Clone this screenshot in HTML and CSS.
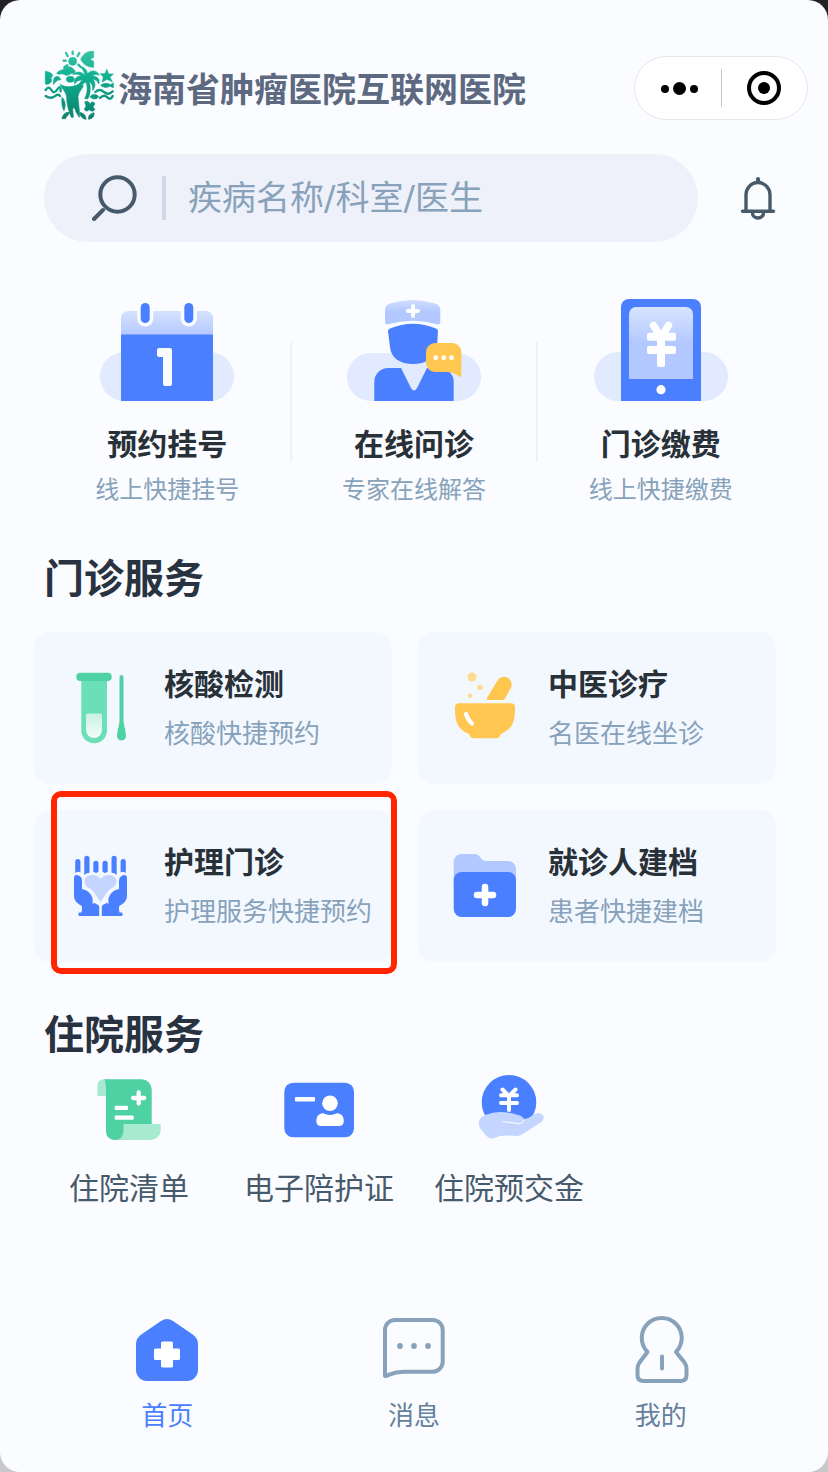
FILE: index.html
```html
<!DOCTYPE html>
<html lang="zh-CN">
<head>
    <meta charset="UTF-8">
    <meta name="viewport" content="width=device-width, initial-scale=1.0">
    <title>海南省肿瘤医院互联网医院</title>
    <link rel="stylesheet" href="styles.css">
</head>
<body>
    <div class="screen">
        <header class="header">
            <svg class="logo" viewBox="12 18 210 210" aria-hidden="true">
                <defs>
                    <linearGradient id="logoFill" gradientUnits="userSpaceOnUse" x1="0" y1="18" x2="0" y2="228">
                        <stop offset="0" stop-color="#3cc4a4"/>
                        <stop offset="0.4" stop-color="#0fae90"/>
                        <stop offset="1" stop-color="#0b7f6b"/>
                    </linearGradient>
                </defs>
                <g fill="url(#logoFill)" stroke="url(#logoFill)" stroke-width="2" stroke-linejoin="round">
                    <!-- sun and bird -->
                    <circle cx="98" cy="52" r="12"/>
                    <path d="M122 46C132 26 144 21 161 22V40L150 46L161 52V70C144 70 130 62 122 46Z"/>
                    <!-- cloud -->
                    <path d="M50 88C56 78 66 80 72 74C82 64 98 68 102 78C108 80 106 88 98 88C90 88 84 98 74 92C66 86 58 94 50 88Z"/>
                    <!-- palm tree -->
                    <path d="M137 96C124 80 108 82 98 92C108 88 118 92 124 96C108 96 102 106 104 120C110 110 118 108 128 108C118 114 116 126 120 134C124 124 132 116 138 114C144 132 142 150 134 164H144C152 148 152 130 148 112C156 118 160 128 158 140C168 128 166 112 158 106C166 106 174 112 176 120C182 106 170 94 156 96C162 90 172 90 178 94C172 78 152 76 142 90C142 78 134 68 120 68C130 76 132 84 137 96Z"/>
                    <!-- figure -->
                    <ellipse cx="91" cy="106" rx="12" ry="9"/>
                    <path d="M60 120C74 132 102 130 120 118L130 126C124 138 116 144 114 158C114 176 120 196 118 220L108 204C104 190 100 188 98 196L100 220H94C84 196 80 178 80 158C78 144 66 134 60 120Z"/>
                    <!-- star -->
                    <path d="M200 76L206 90L220 90L210 100L217 113L201 106L187 114L190 99L181 89L195 89Z"/>
                    <!-- butterfly and fish -->
                    <path d="M16 82C36 84 44 96 32 102C40 112 28 124 16 120Z"/>
                    <path d="M42 102C50 94 60 96 62 108C54 106 48 112 40 122Z"/>
                    <path d="M182 124C192 116 204 117 210 122L220 117V131L210 127C200 132 190 131 182 124Z"/>
                    <path d="M150 158C158 148 170 150 176 158C168 168 158 166 150 158Z"/>
                    <!-- flower -->
                    <path d="M134 174C142 168 148 174 150 180C156 170 166 174 164 182C158 186 158 190 165 196C160 204 152 202 148 197C142 204 132 202 134 192C140 188 138 184 134 174Z"/>
                    <!-- leaves -->
                    <path d="M66 160C76 170 78 184 72 200C66 190 64 176 66 160Z"/>
                    <path d="M66 224C68 212 78 202 88 206C86 214 80 216 76 224Z"/>
                    <path d="M120 206C130 206 138 214 138 226C128 224 120 218 120 206Z"/>
                    <path d="M162 206C148 210 144 216 146 226C158 224 164 216 162 206Z"/>
                </g>
                <g fill="none" stroke="url(#logoFill)" stroke-width="7" stroke-linecap="round">
                    <path d="M98 30V23M113 36L118 27M83 36L78 27M77 50H71M82 64L73 70M115 62L122 69"/>
                    <path d="M17 138Q26 124 34 138T52 136T62 142M17 156Q32 166 44 157T60 156"/>
                    <path d="M166 144Q178 132 192 144T218 142M180 162Q192 150 202 160T218 156"/>
                </g>
            </svg>
            <h1 class="title">海南省肿瘤医院互联网医院</h1>
            <div class="capsule">
                <button type="button" class="capsule-btn" aria-label="更多">
                    <svg width="42" height="14" viewBox="-4 0 42 14">
                        <circle cx="4" cy="8" r="4"/>
                        <circle cx="18.500" cy="7.500" r="6.5"/>
                        <circle cx="33" cy="8" r="4"/>
                    </svg>
                </button>
                <span class="capsule-line"></span>
                <button type="button" class="capsule-btn" aria-label="关闭">
                    <svg width="34" height="34" viewBox="0 0 34 34">
                        <circle cx="17" cy="17" r="15" fill="none" stroke="#000" stroke-width="4"/>
                        <circle cx="17" cy="17" r="6"/>
                    </svg>
                </button>
            </div>
        </header>

        <div class="search-row">
            <label class="search">
                <svg class="search-icon" viewBox="0 0 46 46" fill="none" stroke="#475a6b" stroke-width="4" stroke-linecap="round" aria-hidden="true">
                    <circle cx="25.5" cy="19.5" r="17.2"/>
                    <path d="M11 35L2 44"/>
                </svg>
                <span class="search-line"></span>
                <input type="text" class="search-input" placeholder="疾病名称/科室/医生" aria-label="搜索">
            </label>
            <button type="button" class="bell" aria-label="通知">
                <svg width="36" height="44" viewBox="0 0 36 44" fill="none" stroke="#475a6b" stroke-width="3.4" stroke-linecap="round">
                    <path d="M6 35V19a12 12.5 0 0 1 24 0v16M2.500 35.300h31M12.500 37a5.500 5 0 0 0 11 0"/>
                    <path d="M18 3v2" stroke-width="4"/>
                </svg>
            </button>
        </div>

        <nav class="entries">
            <a href="#" class="entry">
                <svg class="entry-icon" viewBox="0 0 134 104" aria-hidden="true">
                    <defs>
                        <linearGradient id="calTop" x1="0" y1="0" x2="0" y2="1">
                            <stop offset="0" stop-color="#d6e2ff"/>
                            <stop offset="1" stop-color="#b3c8ff"/>
                        </linearGradient>
                    </defs>
                    <rect y="54" width="134" height="49" rx="24.5" fill="#e1eafe"/>
                    <path d="M21 37V20a7 7 0 0 1 7-7h78a7 7 0 0 1 7 7v17z" fill="url(#calTop)"/>
                    <rect x="21" y="36.500" width="92" height="66.500" fill="#4a80ff"/>
                    <g fill="#4a80ff" stroke="#fbfcff" stroke-width="7" paint-order="stroke">
                        <rect x="40.700" y="5" width="9" height="20" rx="4.500"/>
                        <rect x="84.300" y="5" width="9" height="20" rx="4.500"/>
                    </g>
                    <path d="M59 50h11q2 0 2 2v34q0 2-2 2h-5q-2 0-2-2V59h-4q-2 0-2-2v-5q0-2 2-2z" fill="#fafbff"/>
                </svg>
                <span class="entry-name">预约挂号</span>
                <span class="entry-desc">线上快捷挂号</span>
            </a>
            <a href="#" class="entry">
                <svg class="entry-icon" viewBox="0 0 134 104" aria-hidden="true">
                    <defs>
                        <linearGradient id="capFill" x1="0" y1="0" x2="0" y2="1">
                            <stop offset="0" stop-color="#d0deff"/>
                            <stop offset="0.5" stop-color="#b3c8ff"/>
                        </linearGradient>
                    </defs>
                    <rect y="55" width="134" height="48" rx="24" fill="#e1eafe"/>
                    <path d="M38 12q0-5 5-6.500Q66-1.500 88 5.500q5.300 1.500 5.300 6.500v12q0 3-3 2.300Q66 19 41 26.300q-3 .7-3-2.300z" fill="url(#capFill)"/>
                    <path d="M66 8v10M61 13h10" stroke="#fff" stroke-width="4" stroke-linecap="round"/>
                    <path d="M41 33q0-2 2-2.500Q66 21 89 30.500q2 .5 2 2.500l-1 16C88 60 79 66 66 66S44 60 43 49z" fill="#4a80ff"/>
                    <path d="M27.300 103V84a14 14 0 0 1 14-14H54l10 20q3 5 6 0l10-20h12.700a14 14 0 0 1 14 14v19z" fill="#4a80ff"/>
                    <path d="M88 45h17.300a9 9 0 0 1 9 9v24q-1 1.500-3 0-5-4-10.300-4H88a9 9 0 0 1-9-9V54a9 9 0 0 1 9-9z" fill="#ffc74f"/>
                    <g fill="#fff">
                        <circle cx="88.700" cy="59.700" r="2.400"/>
                        <circle cx="96.700" cy="59.700" r="2.400"/>
                        <circle cx="104.500" cy="59.700" r="2.400"/>
                    </g>
                </svg>
                <span class="entry-name">在线问诊</span>
                <span class="entry-desc">专家在线解答</span>
            </a>
            <a href="#" class="entry">
                <svg class="entry-icon" viewBox="0 0 134 104" aria-hidden="true">
                    <defs>
                        <linearGradient id="payFill" x1="0" y1="0" x2="0" y2="1">
                            <stop offset="0" stop-color="#d8e4ff"/>
                            <stop offset="0.5" stop-color="#b3c8ff"/>
                        </linearGradient>
                    </defs>
                    <rect y="54" width="134" height="49" rx="24.5" fill="#e1eafe"/>
                    <path d="M27 103V9a8 8 0 0 1 8-8h64a8 8 0 0 1 8 8v94z" fill="#4a80ff"/>
                    <path d="M35 81V16a7 7 0 0 1 7-7h50a7 7 0 0 1 7 7v65z" fill="url(#payFill)"/>
                    <path d="M59.500 27.500l7.500 12 7.500-12" fill="none" stroke="#fff" stroke-width="7.500" stroke-linecap="round"/>
                    <g fill="#fff">
                        <rect x="53" y="34.700" width="29" height="8" rx="2"/>
                        <rect x="53" y="48" width="29" height="8" rx="2"/>
                        <rect x="63" y="36" width="8" height="33" rx="2"/>
                        <circle cx="67" cy="91.700" r="4.600"/>
                    </g>
                </svg>
                <span class="entry-name">门诊缴费</span>
                <span class="entry-desc">线上快捷缴费</span>
            </a>
        </nav>

        <h2 class="section-title">门诊服务</h2>
        <div class="cards">
            <a href="#" class="card">
                <svg class="card-icon" viewBox="0 0 64 80" aria-hidden="true">
                    <defs>
                        <linearGradient id="tubeFill" x1="0" y1="0" x2="0" y2="1">
                            <stop offset="0" stop-color="#c9f1e1"/>
                            <stop offset="1" stop-color="#f3fbfa"/>
                        </linearGradient>
                    </defs>
                    <path d="M13.300 10H39v52.500a12.800 12.800 0 0 1-25.700 0z" fill="#6bdfb8"/>
                    <rect x="8.300" y="4.700" width="35.400" height="8.300" rx="4.100" fill="#4ed1a3"/>
                    <path d="M18 47q0-1.500 1.500-1.500h13q1.500 0 1.500 1.500v15a8 8 0 0 1-16 0z" fill="url(#tubeFill)"/>
                    <path d="M51.500 9a2 2 0 0 1 4 0v44q.3 4 1.800 9l.7 6a4.500 4.500 0 0 1-9 0l.7-6q1.500-5 1.800-9z" fill="#4ed1a3"/>
                </svg>
                <span class="card-text">
                    <span class="card-name">核酸检测</span>
                    <span class="card-desc">核酸快捷预约</span>
                </span>
            </a>
            <a href="#" class="card">
                <svg class="card-icon" viewBox="0 0 64 80" aria-hidden="true">
                    <g fill="#ffdb92">
                        <circle cx="20" cy="9" r="4.500"/>
                        <circle cx="28" cy="19.500" r="2.800"/>
                        <circle cx="18" cy="27.700" r="2.300"/>
                    </g>
                    <path d="M36 32q-2-.5-1-2.300L45.500 12.500a7.600 7.600 0 0 1 13 8L52 32z" fill="#ffc74f"/>
                    <path d="M3 39q0-3.700 4-3.700h52q4 0 4 3.700C63 53 61 61 49 66q-1.500 4.300-5 4.300H22q-3.500 0-5-4.300C5 61 3 53 3 39z" fill="#ffc74f"/>
                    <path d="M14 46q2 6 6 9.500" fill="none" stroke="#fff" stroke-width="4.200" stroke-linecap="round"/>
                </svg>
                <span class="card-text">
                    <span class="card-name">中医诊疗</span>
                    <span class="card-desc">名医在线坐诊</span>
                </span>
            </a>
            <a href="#" class="card marked">
                <svg class="card-icon" viewBox="0 0 64 80" aria-hidden="true">
                    <defs>
                        <g id="hand">
                            <path d="M7.200 27V15.500a2.600 2.600 0 0 1 5.200 0v11q-2-1.500-5.200.5z"/>
                            <path d="M16.300 29V12.300a2.600 2.600 0 0 1 5.200 0v14.500q-3 0-5.200 2.200z"/>
                            <path d="M25.300 26V17.300a2.600 2.600 0 0 1 5.200 0v8.200l-2 1.500z"/>
                            <path d="M6 31.500q0-3 3-2.500 5 1 5 6v8q7 1 10 8 1 2 .5 7 2-2 3.500 0 3 .5 3.200 3v9H11q-1.500-2 0-3.500h2.500q1-3 .3-6.500Q6 56 6 50z"/>
                        </g>
                    </defs>
                    <g fill="#4a80ff">
                        <use href="#hand"/>
                        <use href="#hand" transform="matrix(-1 0 0 1 65 0)"/>
                    </g>
                    <path d="M32.500 56.500q-2-4-4.500-7c-2-4-5-7-8-8a8 8 0 0 1-3.500-7c1-6 11-8 16-1.500 5-6.500 15-4.500 16 1.500a8 8 0 0 1-3.500 7c-3 1-6 4-8 8q-2.500 3-4.500 7z" fill="#c4d5ff"/>
                </svg>
                <span class="card-text">
                    <span class="card-name">护理门诊</span>
                    <span class="card-desc">护理服务快捷预约</span>
                </span>
            </a>
            <a href="#" class="card">
                <svg class="card-icon" viewBox="0 0 64 80" aria-hidden="true">
                    <path d="M1.700 40V16a8 8 0 0 1 8-8H23q3 0 5 3l1.500 2q2 2 4.500 2h22a8 8 0 0 1 8 8v17z" fill="#b3c8ff"/>
                    <rect x="1.700" y="26" width="62.300" height="45" rx="8" fill="#4a80ff"/>
                    <path d="M33 41v16M25 49h16" stroke="#fff" stroke-width="6.500" stroke-linecap="round"/>
                </svg>
                <span class="card-text">
                    <span class="card-name">就诊人建档</span>
                    <span class="card-desc">患者快捷建档</span>
                </span>
            </a>
        </div>

        <h2 class="section-title">住院服务</h2>
        <div class="services">
            <a href="#" class="service">
                <svg class="icon" viewBox="0 0 72 72" aria-hidden="true">
                    <path d="M13 24H4.300V14q0-6.700 6.700-6.700h4z" fill="#a8ead1"/>
                    <path d="M30.300 52h37.400v6a10 10 0 0 1-10 10H22z" fill="#a8ead1"/>
                    <path d="M11.500 7.300h37.200a10 10 0 0 1 10 10V52H30.500v6q0 10-9.500 10-8-1-8-9V20q0-9-1.500-12.700z" fill="#4ed1a3"/>
                    <path d="M45.700 20.500v11M40.200 26h11" stroke="#fff" stroke-width="4.300" stroke-linecap="round"/>
                    <rect x="21.700" y="33.700" width="13.300" height="4.300" rx="1" fill="#fff"/>
                    <rect x="21.700" y="43.400" width="19" height="4.300" rx="1" fill="#fff"/>
                </svg>
                <span class="service-name">住院清单</span>
            </a>
            <a href="#" class="service">
                <svg class="icon" viewBox="0 0 72 72" aria-hidden="true">
                    <rect x="1.300" y="10.700" width="69.700" height="54.600" rx="9" fill="#4a80ff"/>
                    <g fill="#fff">
                        <rect x="12" y="25" width="20" height="4.600" rx="1"/>
                        <circle cx="47" cy="31.300" r="7.800"/>
                        <path d="M33.300 49q0-6.500 5-7.600 2-.3 4 .6 4.700 2 9.500 0 2-.9 4-.6 5 1.200 5 7.600 0 5-5 5H38.300q-5 0-5-5z"/>
                    </g>
                </svg>
                <span class="service-name">电子陪护证</span>
            </a>
            <a href="#" class="service">
                <svg class="icon" viewBox="0 0 72 72" aria-hidden="true">
                    <circle cx="36" cy="30.300" r="27.300" fill="#4a80ff"/>
                    <path d="M29.500 17.500L36 24l6.500-6.500M28 23.300h16M28 31h16M36 24v14" fill="none" stroke="#fff" stroke-width="4" stroke-linecap="round"/>
                    <path d="M12 43Q20 40 27 40q9 0 18 3 4 .5 6 4 5-.5 9-4 5-3 8-1.500 5 3 1 8L50 62q-3 2-7 2-10-1-16 0l-7 2.500q-4 .5-7-3L7 56q-4-9 5-13z" fill="#c4d5ff"/>
                    <path d="M29.500 49.500l15 2q6 1 6.500-4" fill="none" stroke="#fff" stroke-width="1"/>
                </svg>
                <span class="service-name">住院预交金</span>
            </a>
        </div>

        <nav class="tabbar">
            <a href="#" class="tab active">
                <svg class="icon" viewBox="0 0 72 72" aria-hidden="true">
                    <path d="M30 7q6-4 12 0l19 13q6 4 6 10v26a11 11 0 0 1-11 11H16A11 11 0 0 1 5 56V30q0-6 6-10z" fill="#4a80ff"/>
                    <path d="M31.500 27.500h9q1.500 0 1.500 1.500v5.500h5.500q1.500 0 1.500 1.500v8.500q0 1.500-1.500 1.500H42v6q0 1.500-1.500 1.500h-9q-1.500 0-1.500-1.500v-6h-5.500q-1.500 0-1.500-1.500V36q0-1.500 1.500-1.500H30V29q0-1.500 1.500-1.500z" fill="#fff"/>
                </svg>
                <span>首页</span>
            </a>
            <a href="#" class="tab">
                <svg class="icon" viewBox="0 0 72 72" aria-hidden="true">
                    <path d="M7 62V16A10 10 0 0 1 17 6h37.700a10 10 0 0 1 10 10v31.700a10 10 0 0 1-10 10H26q-8 0-15 3-3 1.800-4 1.300z" fill="none" stroke="#87a2ba" stroke-width="4" stroke-linejoin="round"/>
                    <g fill="#87a2ba">
                        <circle cx="22" cy="32" r="2.900"/>
                        <circle cx="36" cy="32" r="2.900"/>
                        <circle cx="50" cy="32" r="2.900"/>
                    </g>
                </svg>
                <span>消息</span>
            </a>
            <a href="#" class="tab">
                <svg class="icon" viewBox="0 0 72 72" fill="none" stroke="#87a2ba" stroke-width="4" stroke-linecap="round" aria-hidden="true">
                    <path d="M22.500 38a20 20 0 1 1 28.500 0l8.500 10.500q2 3 2 6V61q0 6-6 6h-37q-6 0-6-6v-6.500q0-3 2-6z" stroke-linejoin="round"/>
                    <path d="M37 42.500v12"/>
                </svg>
                <span>我的</span>
            </a>
        </nav>
    </div>
</body>
</html>
```

FILE: styles.css
```css
* {
    box-sizing: border-box;
}

body {
    margin: 0;
    font-family: "Noto Sans CJK SC", "Noto Sans", sans-serif;
    background: linear-gradient(#222 50%, #c8c8c8 50%);
}

a {
    color: inherit;
    text-decoration: none;
}

button {
    padding: 0;
    border: none;
    background: none;
    cursor: pointer;
}

svg {
    display: block;
    flex-shrink: 0;
}

.screen {
    display: flex;
    flex-direction: column;
    min-height: 100vh;
    background-color: #fbfcff;
    border-radius: 20px;
}

/* header */
.header {
    display: flex;
    align-items: flex-end;
    padding: 50px 20px 0 44px;
}

.logo {
    width: 70px;
    height: 70px;
}

.title {
    margin: 0 0 0 4px;
    font-size: 34px;
    line-height: 64px;
    font-weight: bold;
    color: #5d6980;
    white-space: nowrap;
}

.capsule {
    display: flex;
    align-items: center;
    width: 174px;
    height: 64px;
    margin-left: auto;
    border: 1px solid #e6e7ea;
    border-radius: 32px;
    background-color: #fff;
}

.capsule-btn {
    flex: 1;
    display: flex;
    justify-content: center;
}

.capsule-line {
    width: 1px;
    height: 38px;
    background-color: #c4c5c8;
}

/* search */
.search-row {
    display: flex;
    align-items: center;
    gap: 42px;
    margin-top: 34px;
    padding: 0 52px 0 44px;
}

.search {
    flex: 1;
    display: flex;
    align-items: center;
    height: 88px;
    padding: 0 48px;
    border-radius: 44px;
    background-color: #eef1f9;
}

.search-icon {
    width: 46px;
    height: 46px;
}

.search-line {
    width: 4px;
    height: 44px;
    margin: 0 22px 0 24px;
    background-color: #d0d8e8;
}

.search-input {
    flex: 1;
    min-width: 0;
    padding: 0;
    border: none;
    outline: none;
    background: none;
    font-family: "DejaVu Sans", "Noto Sans CJK SC", sans-serif;
    font-size: 34px;
    color: #475a6b;
}

.search-input::placeholder {
    color: #87a2ba;
}

/* main entries */
.entries {
    display: grid;
    grid-template-columns: repeat(3, 1fr);
    margin-top: 56px;
    padding: 0 44px 2px;
}

.entry {
    position: relative;
    display: flex;
    flex-direction: column;
    align-items: center;
}

.entry + .entry::before {
    content: "";
    position: absolute;
    top: 44px;
    left: -1px;
    width: 2px;
    height: 120px;
    background-color: #eff1f8;
}

.entry-icon {
    width: 134px;
    height: 104px;
}

.entry-name {
    margin-top: 20px;
    font-size: 30px;
    line-height: 40px;
    font-weight: bold;
    color: #283038;
}

.entry-desc {
    margin-top: 10px;
    font-size: 24px;
    line-height: 32px;
    color: #87a2ba;
}

.section-title {
    margin: 42px 44px 0;
    font-size: 40px;
    line-height: 56px;
    font-weight: bold;
    color: #283241;
}

/* outpatient cards */
.cards {
    display: grid;
    grid-template-columns: 1fr 1fr;
    gap: 26px;
    margin-top: 28px;
    padding: 0 52px 0 34px;
}

.card {
    position: relative;
    display: flex;
    align-items: center;
    gap: 32px;
    height: 152px;
    padding-left: 34px;
    border-radius: 16px;
    background-color: #f3f8ff;
}

.card-icon {
    width: 64px;
    height: 80px;
    overflow: visible;
}

.card-text {
    display: flex;
    flex-direction: column;
    gap: 12px;
    padding-bottom: 4px;
    white-space: nowrap;
}

.card-name {
    font-size: 30px;
    line-height: 40px;
    font-weight: bold;
    color: #283038;
}

.card-desc {
    font-size: 26px;
    line-height: 36px;
    color: #87a2ba;
}

.marked::after {
    content: "";
    position: absolute;
    top: -19px;
    right: -5px;
    bottom: -12px;
    left: 17px;
    border: 6px solid #ff2600;
    border-radius: 10px;
}

/* inpatient services */
.services {
    display: flex;
    margin-top: 12px;
    padding: 0 34px;
}

.service {
    display: flex;
    flex-direction: column;
    align-items: center;
    gap: 22px;
    width: 190px;
}

.icon {
    width: 72px;
    height: 72px;
}

.service-name {
    font-size: 30px;
    line-height: 40px;
    color: #475a6b;
}

/* bottom tabs */
.tabbar {
    display: grid;
    grid-template-columns: repeat(3, 1fr);
    margin-top: auto;
    padding: 40px 44px;
}

.tab {
    display: flex;
    flex-direction: column;
    align-items: center;
    gap: 10px;
    font-size: 26px;
    line-height: 36px;
    color: #63809c;
}

.tab.active {
    color: #4a80ff;
}
```
